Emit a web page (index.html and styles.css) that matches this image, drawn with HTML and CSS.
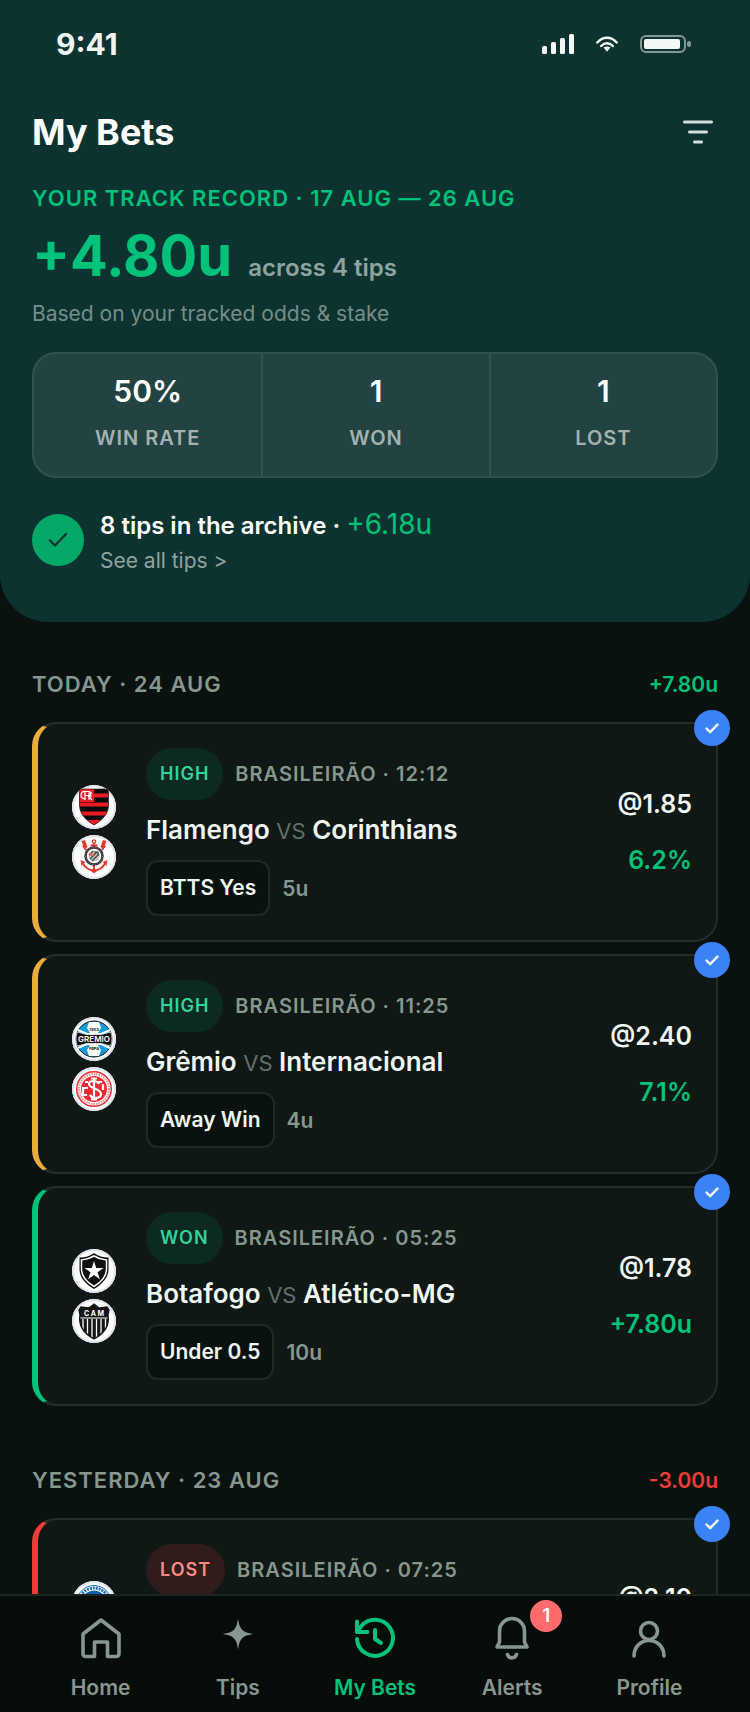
FILE: index.html
```html
<!DOCTYPE html>
<html lang="en">
<head>
    <meta charset="UTF-8">
    <meta name="viewport" content="width=device-width, initial-scale=1.0">
    <title>My Bets</title>
    <link rel="stylesheet" href="styles.css">
</head>
<body>

    <main class="screen">

        <!-- Track record -->
        <header class="hero">
            <div class="status-bar">
                <span class="clock">9:41</span>
                <div class="status-icons">
                    <svg width="32" height="20" viewBox="0 0 32 20" fill="#f3f8f4" aria-hidden="true">
                        <rect x="0" y="12" width="5" height="8" rx="1.5"/><rect x="9" y="8" width="5" height="12" rx="1.5"/><rect x="18" y="4" width="5" height="16" rx="1.5"/><rect x="27" y="0" width="5" height="20" rx="1.5"/>
                    </svg>
                    <svg width="24" height="16" viewBox="0 0 24 16" fill="none" stroke="#f3f8f4" stroke-width="2.5" stroke-linecap="round" aria-hidden="true">
                        <path d="M2.300 6.500C8 .2 16 .2 21.700 6.500M6.200 10c3.400-3.600 8.200-3.600 11.600 0"/>
                        <path d="M8.500 11.600c2-1.600 5-1.600 7 0L12 15.700z" fill="#f3f8f4" stroke="none"/>
                    </svg>
                    <svg width="51" height="18" viewBox="0 0 51 18" aria-hidden="true">
                        <rect x="1" y="1" width="44" height="16" rx="5" fill="none" stroke="#859994" stroke-width="2"/>
                        <rect x="4" y="4" width="36" height="10" rx="2" fill="#f3f8f4"/>
                        <rect x="47" y="6" width="4" height="6" rx="2" fill="#859994"/>
                    </svg>
                </div>
            </div>

            <div class="title-bar">
                <h1>My Bets</h1>
                <button class="filter-btn" type="button" aria-label="Filter bets">
                    <svg width="30" height="24" viewBox="0 0 30 24" fill="none" stroke="#d5e0de" stroke-width="3" stroke-linecap="round">
                        <path d="M1.500 2h27M6.500 12h17M11.500 22h7"/>
                    </svg>
                </button>
            </div>

            <p class="eyebrow">YOUR TRACK RECORD · 17 AUG — 26 AUG</p>
            <p class="total"><strong>+4.80u</strong> <span>across 4 tips</span></p>
            <p class="note">Based on your tracked odds &amp; stake</p>

            <dl class="stats">
                <div class="stat"><dt>WIN RATE</dt><dd>50%</dd></div>
                <div class="stat"><dt>WON</dt><dd>1</dd></div>
                <div class="stat"><dt>LOST</dt><dd>1</dd></div>
            </dl>

            <div class="archive">
                <span class="archive-icon">
                    <svg width="20" height="16" viewBox="0 0 20 16" fill="none" stroke="#0d3330" stroke-width="2.400" stroke-linecap="round" stroke-linejoin="round" aria-hidden="true"><path d="M2 8.500l5 5L18 2"/></svg>
                </span>
                <div class="archive-text">
                    <p class="archive-title">8 tips in the archive · <span>+6.18u</span></p>
                    <a class="archive-link" href="#">See all tips &gt;</a>
                </div>
            </div>
        </header>

        <!-- Today -->
        <section class="day">
            <div class="day-head">
                <h2>TODAY · 24 AUG</h2>
                <span class="day-total">+7.80u</span>
            </div>

            <article class="bet pending">
                <span class="tick"><svg width="14" height="11" viewBox="0 0 14 11"><path d="M1.500 5.500l3.700 3.700L12.500 1.500"/></svg></span>
                <div class="crests">
                    <!-- Flamengo -->
                    <svg class="crest" viewBox="0 0 44 44" aria-hidden="true">
                        <clipPath id="fla"><path d="M7.500 4h29v16c0 9-6 15-14.500 20C13.500 35 7.500 29 7.500 20z"/></clipPath>
                        <g clip-path="url(#fla)">
                            <path fill="#0b0b0b" d="M7 3h30v38H7z"/>
                            <path fill="#ec1c24" d="M7 8.500h30v4H7zM7 17.500h30v4H7zM7 26.500h30v4H7zM7 35h30v6H7z"/>
                            <path fill="#ec1c24" d="M7 4h15v13H7z"/>
                            <path d="M14 6.500c-4-1-5 2-5 4s2 4 4 2.500M13 15V6.500h3.500c3 0 3 4 0 4H13M16 10.500l4 4.500M17 15V8h3M17 11h3" fill="none" stroke="#fff" stroke-width="1.200"/>
                        </g>
                        <path fill="none" stroke="#332225" stroke-width=".7" d="M7.500 4h29v16c0 9-6 15-14.500 20C13.500 35 7.500 29 7.500 20z"/>
                    </svg>
                    <!-- Corinthians -->
                    <svg class="crest" viewBox="0 0 44 44" fill="none" aria-hidden="true">
                        <path d="M22 8v28M18.500 10.500h7M14 15l-3-4.500M30 15l3-4.500M10.500 28c3 5 7 7.500 11.500 7.500S30.500 33 33.500 28" stroke="#ea392c" stroke-width="2"/>
                        <circle cx="22" cy="6.500" r="1.700" stroke="#ea392c" stroke-width="1.300"/>
                        <path d="M9.500 6l3.500-1 2.500 7-3 2.500zM34.500 6l-3.500-1-2.500 7 3 2.500zM8.500 25l5 2-4 4zM35.500 25l-5 2 4 4zM19 36l3-3 3 3-3 2.500z" fill="#ea392c"/>
                        <circle cx="22" cy="21" r="8.500" fill="#fff" stroke="#333" stroke-width="2.500"/>
                        <circle cx="22" cy="21" r="8.500" stroke="#999" stroke-width=".8" stroke-dasharray="1 1.300"/>
                        <circle cx="22" cy="21" r="5.500" fill="#c4c4c4"/>
                        <path d="M18 24l7-7M20 26l7-7M17 20l4-4M22 17h4v4" stroke="#444" stroke-width="1.200"/>
                        <path d="M17.500 17.500h4v3.500h-4z" fill="#dd7468"/>
                    </svg>
                </div>
                <div class="bet-body">
                    <div class="meta"><span class="pill">HIGH</span><span class="league">BRASILEIRÃO · 12:12</span></div>
                    <h3>Flamengo <span>VS</span> Corinthians</h3>
                    <div class="pick"><span class="chip">BTTS Yes</span><span class="stake">5u</span></div>
                </div>
                <div class="figures"><span class="odds">@1.85</span><span class="gain">6.2%</span></div>
            </article>

            <article class="bet pending">
                <span class="tick"><svg width="14" height="11" viewBox="0 0 14 11"><path d="M1.500 5.500l3.700 3.700L12.500 1.500"/></svg></span>
                <div class="crests">
                    <!-- Grêmio -->
                    <svg class="crest" viewBox="0 0 44 44" aria-hidden="true">
                        <circle cx="22" cy="22" r="18" fill="#0d9ddd" stroke="#161616"/>
                        <path d="M6 13l9 4h14l9-4M6 31l9-4h14l9 4" fill="none" stroke="#fff" stroke-width="2"/>
                        <path d="M17 5h10l2 6-3 5h-8l-3-5zM17 39h10l2-6-3-5h-8l-3 5z" fill="#fff"/>
                        <path d="M5.500 15l9 2.500h15l9-2.500c2 4 2 10 0 14l-9-2.500h-15L5.500 29c-2-4-2-10 0-14z" fill="#111" stroke="#fff" stroke-width=".7"/>
                        <text x="22" y="25" text-anchor="middle" class="crest-name">GRÊMIO</text>
                        <text x="22" y="14" text-anchor="middle" class="crest-year">1903</text>
                        <text x="22" y="33" text-anchor="middle" class="crest-year">FBPA</text>
                    </svg>
                    <!-- Internacional -->
                    <svg class="crest" viewBox="0 0 44 44" fill="none" aria-hidden="true">
                        <circle cx="22" cy="22" r="17.300" stroke="#ed2a30" stroke-width="1.500"/>
                        <circle cx="22" cy="22" r="15" stroke="#f28a8d" stroke-width="2" stroke-dasharray="1.500 1"/>
                        <circle cx="22" cy="22" r="13" fill="#ed2a30"/>
                        <path d="M22 11v22M19 11.500h6M19 32.500h6M27 17c-2-4-10-4-10 0 0 5 12 4 12 10 0 5-9 5-11 1M16 15h-3M30 15h-4M15 28h-4v-7h5M31 17v6" stroke="#fff" stroke-width="2.200"/>
                    </svg>
                </div>
                <div class="bet-body">
                    <div class="meta"><span class="pill">HIGH</span><span class="league">BRASILEIRÃO · 11:25</span></div>
                    <h3>Grêmio <span>VS</span> Internacional</h3>
                    <div class="pick"><span class="chip">Away Win</span><span class="stake">4u</span></div>
                </div>
                <div class="figures"><span class="odds">@2.40</span><span class="gain">7.1%</span></div>
            </article>

            <article class="bet won">
                <span class="tick"><svg width="14" height="11" viewBox="0 0 14 11"><path d="M1.500 5.500l3.700 3.700L12.500 1.500"/></svg></span>
                <div class="crests">
                    <!-- Botafogo -->
                    <svg class="crest" viewBox="0 0 44 44" aria-hidden="true">
                        <path d="M22 4c4 3 9 4.500 14.500 4.500V20c0 9-6 15-14.500 20C13.500 35 7.500 29 7.500 20V8.500C13 8.500 18 7 22 4z" fill="#111"/>
                        <path d="M22 7c4 2.500 8 3.500 12.500 4v9c0 8-5 13-12.500 17.500C14.500 33 9.500 28 9.500 20v-9C14 10.500 18 9.500 22 7z" fill="#111" stroke="#fff" stroke-width="1.500"/>
                        <path d="M22 12l2.200 7h7.300l-6 4.300 2.400 7L22 26l-5.900 4.300 2.400-7-6-4.300h7.300z" fill="#fff"/>
                    </svg>
                    <!-- Atlético-MG -->
                    <svg class="crest" viewBox="0 0 44 44" aria-hidden="true">
                        <clipPath id="cam"><path d="M22 5l5 4 8-1 2 3-1 5c2 11-5 19-14 24C13 35 6 27 8 16l-1-5 2-3 8 1z"/></clipPath>
                        <g clip-path="url(#cam)">
                            <path fill="#151515" d="M5 4h34v37H5z"/>
                            <path d="M11 20v19M15.500 20v19M20 20v19M24.500 20v19M29 20v19M33.500 20v19" stroke="#fff" stroke-width="1.300"/>
                            <path d="M7 19h30" stroke="#fff" stroke-width="1"/>
                        </g>
                        <path d="M22 5l5 4 8-1 2 3-1 5c2 11-5 19-14 24C13 35 6 27 8 16l-1-5 2-3 8 1z" fill="none" stroke="#151515" stroke-width="1.300"/>
                        <text x="22" y="17" text-anchor="middle" class="crest-letters">C A M</text>
                    </svg>
                </div>
                <div class="bet-body">
                    <div class="meta"><span class="pill">WON</span><span class="league">BRASILEIRÃO · 05:25</span></div>
                    <h3>Botafogo <span>VS</span> Atlético-MG</h3>
                    <div class="pick"><span class="chip">Under 0.5</span><span class="stake">10u</span></div>
                </div>
                <div class="figures"><span class="odds">@1.78</span><span class="gain">+7.80u</span></div>
            </article>
        </section>

        <!-- Yesterday -->
        <section class="day">
            <div class="day-head">
                <h2>YESTERDAY · 23 AUG</h2>
                <span class="day-total negative">-3.00u</span>
            </div>

            <article class="bet lost">
                <span class="tick"><svg width="14" height="11" viewBox="0 0 14 11"><path d="M1.500 5.500l3.700 3.700L12.500 1.500"/></svg></span>
                <div class="crests">
                    <!-- Cruzeiro -->
                    <svg class="crest" viewBox="0 0 44 44" fill="none" aria-hidden="true">
                        <circle cx="22" cy="22" r="17.500" stroke="#1d6fb8" stroke-width="1"/>
                        <circle cx="22" cy="22" r="15" stroke="#1d6fb8" stroke-width="3" stroke-dasharray="2 1"/>
                        <circle cx="22" cy="22" r="12.500" fill="#0b5fae"/>
                    </svg>
                    <svg class="crest" viewBox="0 0 44 44" aria-hidden="true"><circle cx="22" cy="22" r="16" fill="#16713f"/></svg>
                </div>
                <div class="bet-body">
                    <div class="meta"><span class="pill">LOST</span><span class="league">BRASILEIRÃO · 07:25</span></div>
                </div>
                <div class="figures"><span class="odds">@2.10</span></div>
            </article>
        </section>

    </main>

    <!-- Bottom navigation -->
    <nav class="tab-bar">
        <a href="#">
            <svg viewBox="0 0 48 48" aria-hidden="true"><path d="M6 20L24 6l18 14v20a2.500 2.500 0 0 1-2.500 2.500H30.500V28h-13v14.500H8.500A2.500 2.500 0 0 1 6 40z"/></svg>
            <span>Home</span>
        </a>
        <a href="#">
            <svg viewBox="0 0 48 48" aria-hidden="true"><path class="solid" d="M24 4.500c1.500 10.500 4 14 15.500 15.500C28 21.500 25.500 25 24 35.500 22.500 25 20 21.500 8.500 20 20 18.500 22.500 15 24 4.500z"/></svg>
            <span>Tips</span>
        </a>
        <a class="active" href="#" aria-current="page">
            <svg viewBox="0 0 48 48" aria-hidden="true"><path d="M6 25a18 18 0 1 0 4-12.500l-4 5M6 7.500v10.500h10.500M24 16v9l6 4"/></svg>
            <span>My Bets</span>
        </a>
        <a href="#">
            <svg viewBox="0 0 48 48" aria-hidden="true"><path d="M11.500 28V17a12.500 12.500 0 0 1 25 0v11l2.500 5H9zM19.500 40.500a4.700 4.700 0 0 0 9 0"/></svg>
            <span>Alerts</span>
            <span class="badge">1</span>
        </a>
        <a href="#">
            <svg viewBox="0 0 48 48" aria-hidden="true"><circle cx="24" cy="17" r="8.500"/><path d="M9 42c0-9 6.500-15.500 15-15.500S39 33 39 42"/></svg>
            <span>Profile</span>
        </a>
    </nav>

</body>
</html>
```

FILE: styles.css
```css
/* Global Styles */
* {
    box-sizing: border-box;
}

body {
    font-family: Inter, "Liberation Sans", sans-serif;
    background-color: #0a120f;
    color: #f0f7f3;
    margin: 0;
    height: 100vh;
    display: flex;
    flex-direction: column;
}

h1, h2, h3, p, dl, dd {
    margin: 0;
}

a {
    color: inherit;
    text-decoration: none;
}

svg {
    display: block;
}

.screen {
    flex: 1;
    min-height: 0;
    overflow-y: auto;
    scrollbar-width: none;
}

/* Track record */
.hero {
    background-color: #0d3330;
    border-radius: 0 0 48px 48px;
    padding: 0 32px 44px;
}

.status-bar {
    display: flex;
    justify-content: space-between;
    align-items: center;
    height: 88px;
    padding: 0 27px 0 24px;
}

.clock {
    font-size: 30px;
    font-weight: 700;
}

.status-icons {
    display: flex;
    align-items: center;
    gap: 21px;
}

.title-bar {
    display: flex;
    justify-content: space-between;
    align-items: center;
    height: 88px;
}

.title-bar h1 {
    font-size: 36px;
    font-weight: 700;
    color: #fff;
}

.filter-btn {
    background: none;
    border: none;
    padding: 5px;
    cursor: pointer;
}

.eyebrow {
    font-size: 22px;
    line-height: 44px;
    font-weight: 600;
    letter-spacing: 1px;
    color: #00c27a;
}

.total {
    display: flex;
    align-items: baseline;
    gap: 16px;
    font-size: 24px;
    line-height: 36px;
    font-weight: 600;
    color: #8fa3a0;
}

.total strong {
    font-size: 56px;
    line-height: 72px;
    font-weight: 700;
    color: #00c27a;
}

.note {
    font-size: 21px;
    line-height: 44px;
    color: #768d89;
}

.stats {
    display: grid;
    grid-template-columns: repeat(3, 1fr);
    margin-top: 16px;
    border: 2px solid #32524f;
    border-radius: 24px;
    background-color: #224341;
}

.stat {
    display: flex;
    flex-direction: column-reverse;
    justify-content: flex-end;
    gap: 8px;
    padding: 16px 0 20px;
    text-align: center;
}

.stat + .stat {
    border-left: 2px solid #32524f;
}

.stat dd {
    font-size: 30px;
    line-height: 42px;
    font-weight: 600;
    color: #fff;
}

.stat dt {
    font-size: 20px;
    line-height: 36px;
    font-weight: 600;
    letter-spacing: 1px;
    color: #a3b2b0;
}

.archive {
    display: flex;
    align-items: center;
    gap: 16px;
    margin-top: 24px;
}

.archive-icon {
    display: grid;
    place-items: center;
    width: 52px;
    height: 52px;
    border-radius: 50%;
    background-color: #04a867;
}

.archive-text {
    padding-top: 6px;
}

.archive-title {
    font-size: 24px;
    line-height: 36px;
    font-weight: 600;
    color: #fff;
}

.archive-title span {
    font-size: 28px;
    line-height: 28px;
    font-weight: 400;
    color: #00c27a;
}

.archive-link {
    display: block;
    font-size: 21px;
    line-height: 34px;
    color: #8fa3a0;
}

/* Day groups */
.day {
    display: flex;
    flex-direction: column;
    gap: 12px;
    padding: 42px 32px 0;
}

.day + .day {
    padding-top: 54px;
}

.day-head {
    display: flex;
    justify-content: space-between;
    align-items: center;
    height: 40px;
    margin-bottom: 6px;
}

.day-head h2 {
    font-size: 22px;
    font-weight: 600;
    letter-spacing: 1px;
    color: #86978f;
}

.day-total {
    font-size: 21px;
    font-weight: 600;
    color: #00c27a;
}

.day-total.negative {
    color: #ec3d38;
}

/* Bet card */
.bet {
    position: relative;
    display: flex;
    align-items: center;
    padding: 24px 24px 24px 34px;
    min-height: 220px;
    border: 2px solid #232e2b;
    border-left-width: 6px;
    border-radius: 24px;
    background-color: #0f1815;
}

.bet.pending {
    border-left-color: #e8ad3c;
}

.bet.won {
    border-left-color: #00c27a;
}

.bet.lost {
    border-left-color: #ec3d38;
}

.tick {
    position: absolute;
    top: -14px;
    right: -14px;
    display: grid;
    place-items: center;
    width: 36px;
    height: 36px;
    border-radius: 50%;
    background-color: #3b82f6;
}

.tick path {
    fill: none;
    stroke: #fff;
    stroke-width: 2.4;
    stroke-linecap: round;
    stroke-linejoin: round;
}

.crests {
    display: flex;
    flex-direction: column;
    gap: 6px;
    margin-right: 30px;
}

.crest {
    width: 44px;
    height: 44px;
    border-radius: 50%;
    background-color: #fff;
    box-shadow: inset 0 0 0 2px #dfe4ef;
}

.crest-name {
    font-size: 8px;
    font-weight: 600;
    fill: #fff;
}

.crest-year {
    font-size: 4px;
    font-weight: 700;
    fill: #111;
}

.crest-letters {
    font-size: 7px;
    font-weight: 700;
    fill: #fff;
}

.bet-body {
    flex: 1;
    align-self: stretch;
}

.meta {
    display: flex;
    align-items: center;
    gap: 12px;
}

.pill {
    padding: 0 14px;
    border-radius: 26px;
    font-size: 18px;
    line-height: 52px;
    font-weight: 600;
    letter-spacing: 1px;
    background-color: #0c2a21;
    color: #34d399;
}

.bet.lost .pill {
    background-color: #301c1a;
    color: #ff8a85;
}

.league {
    font-size: 20px;
    font-weight: 600;
    letter-spacing: 1px;
    color: #86978f;
}

.bet h3 {
    font-size: 26px;
    line-height: 36px;
    font-weight: 600;
    margin: 12px 0;
}

.bet h3 span {
    font-size: 22px;
    line-height: 22px;
    font-weight: 400;
    color: #61706a;
}

.pick {
    display: flex;
    align-items: center;
    gap: 12px;
    font-size: 21px;
    font-weight: 600;
}

.chip {
    padding: 0 12px;
    border: 2px solid #1f2926;
    border-radius: 12px;
    line-height: 52px;
    background-color: #0a120f;
}

.stake {
    color: #86978f;
}

.figures {
    display: flex;
    flex-direction: column;
    gap: 20px;
    font-size: 25px;
    line-height: 36px;
    font-weight: 600;
    text-align: right;
}

.gain {
    color: #00c27a;
}

.bet.lost .figures {
    align-self: flex-start;
    padding-top: 36px;
}

/* Bottom navigation */
.tab-bar {
    display: grid;
    grid-template-columns: repeat(5, 1fr);
    padding: 18px 32px 4px;
    border-top: 2px solid #1b2522;
    background-color: #060c0a;
}

.tab-bar a {
    position: relative;
    display: flex;
    flex-direction: column;
    align-items: center;
    gap: 6px;
    font-size: 21px;
    line-height: 40px;
    font-weight: 600;
    color: #86978f;
}

.tab-bar svg {
    width: 48px;
    height: 48px;
    fill: none;
    stroke: currentColor;
    stroke-width: 3.6;
    stroke-linecap: round;
    stroke-linejoin: round;
}

.tab-bar .solid {
    fill: currentColor;
    stroke: none;
}

.tab-bar .active {
    color: #00c27a;
}

.tab-bar .active svg {
    stroke-width: 4;
}

.tab-bar .badge {
    position: absolute;
    top: -14px;
    left: calc(50% + 18px);
    width: 32px;
    height: 32px;
    border-radius: 50%;
    background-color: #ff6b6b;
    color: #fff;
    font-size: 18px;
    line-height: 32px;
    text-align: center;
}
```
